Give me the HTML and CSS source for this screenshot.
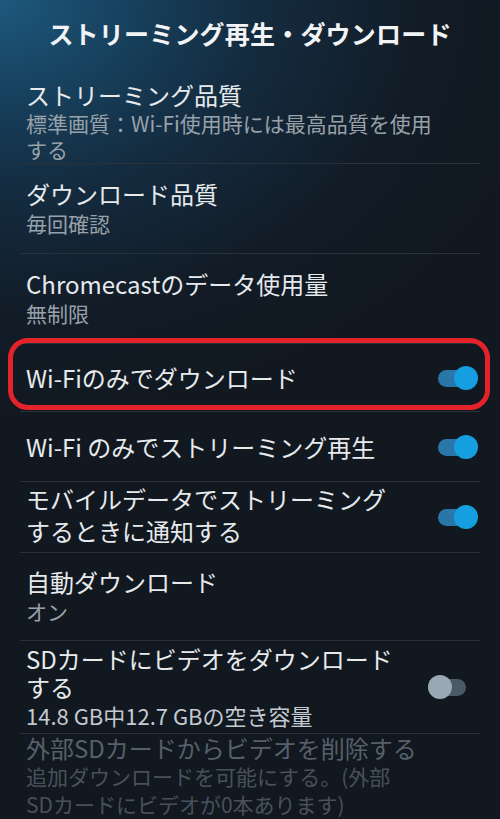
FILE: index.html
```html
<!DOCTYPE html>
<html lang="ja">
<head>
<meta charset="utf-8">
<title>ストリーミング再生・ダウンロード</title>
<link rel="stylesheet" href="styles.css">
</head>
<body>
<div class="screen">
  <header class="header">ストリーミング再生・ダウンロード</header>
  <ul class="list">
    <li class="row row--first">
      <div class="text">
        <div class="title">ストリーミング品質</div>
        <div class="sub">標準画質：Wi-Fi使用時には最高品質を使用する</div>
      </div>
    </li>
    <li class="row">
      <div class="text">
        <div class="title">ダウンロード品質</div>
        <div class="sub">毎回確認</div>
      </div>
    </li>
    <li class="row">
      <div class="text">
        <div class="title">Chromecastのデータ使用量</div>
        <div class="sub">無制限</div>
      </div>
    </li>
    <li class="row row--toggle row--highlight">
      <div class="text"><div class="title">Wi-Fiのみでダウンロード</div></div>
      <div class="switch switch--on"><span class="knob"></span></div>
    </li>
    <li class="row row--toggle row--tall">
      <div class="text"><div class="title">Wi-Fi のみでストリーミング再生</div></div>
      <div class="switch switch--on"><span class="knob"></span></div>
    </li>
    <li class="row row--toggle row--tall row--notify">
      <div class="text"><div class="title">モバイルデータでストリーミングするときに通知する</div></div>
      <div class="switch switch--on"><span class="knob"></span></div>
    </li>
    <li class="row row--auto">
      <div class="text">
        <div class="title">自動ダウンロード</div>
        <div class="sub">オン</div>
      </div>
    </li>
    <li class="row row--toggle row--sd">
      <div class="text">
        <div class="title">SDカードにビデオをダウンロードする</div>
        <div class="sub sub--light">14.8 GB中12.7 GBの空き容量</div>
      </div>
      <div class="switch switch--off"><span class="knob"></span></div>
    </li>
    <li class="row row--disabled">
      <div class="text">
        <div class="title">外部SDカードからビデオを削除する</div>
        <div class="sub">追加ダウンロードを可能にする。(外部SDカードにビデオが0本あります)</div>
      </div>
    </li>
  </ul>
</div>
</body>
</html>
```

FILE: styles.css
```css
html, body {
  margin: 0;
  padding: 0;
  height: 100%;
  background: #111820;
}

.screen {
  width: 500px;
  height: 819px;
  overflow: hidden;
  font-family: "Noto Sans CJK JP", "Noto Sans", sans-serif;
  color: #e6eaed;
  background:
    radial-gradient(ellipse 560px 420px at 0 0, #1d587d 0%, #17425f 22%, #142c40 45%, #121c27 75%, rgba(17,24,32,0) 100%),
    #111820;
}

.header {
  height: 66px;
  line-height: 66px;
  text-align: center;
  font-size: 25px;
  font-weight: 700;
  color: #f1f3f5;
  letter-spacing: 0.2px;
}

.list {
  list-style: none;
  margin: 0 20px;
  padding: 0;
}

.row {
  position: relative;
  display: flex;
  align-items: center;
  padding: 15px 2px 16px 6px;
  border-bottom: 1px solid #29313a;
}

.row--first {
  padding-top: 14px;
  padding-bottom: 1px;
}

.row--first .sub {
  line-height: 26px;
}

.row--auto {
  padding-top: 14px;
  padding-bottom: 15px;
}

.text {
  flex: 1;
  min-width: 0;
  max-width: 420px;
}

.title {
  font-size: 24px;
  line-height: 30px;
  color: #e6eaed;
}

.sub {
  font-size: 21px;
  line-height: 28px;
  color: #98a1a9;
}

.row--toggle {
  padding-top: 0;
  padding-bottom: 0;
  min-height: 67px;
}

.row--toggle .text {
  max-width: 380px;
}

.row--tall {
  min-height: 69px;
}

.row--tall .title {
  line-height: 32px;
}

.row--notify {
  align-items: flex-start;
  padding-top: 1px;
}

.row--notify .switch {
  margin-top: 22px;
}

.row--sd {
  padding-top: 0;
  padding-bottom: 0;
  min-height: 92px;
  align-items: flex-start;
}

.row--sd .text {
  padding-top: 4px;
}

.row--sd .title {
  line-height: 28px;
}

.row--sd .switch {
  margin-top: 34px;
}

.sub--light {
  font-size: 22px;
  color: #c4cad0;
  line-height: 29px;
}

.row--disabled {
  border-bottom: none;
  padding-top: 0;
}

.row--disabled .title {
  color: #56606b;
  line-height: 28px;
}

.row--disabled .sub {
  color: #48515b;
  line-height: 28px;
  max-width: 382px;
}

.row--highlight::after {
  content: "";
  position: absolute;
  left: -12px;
  right: -10px;
  top: -6px;
  bottom: 1px;
  border: 5px solid #e3222a;
  border-radius: 20px;
  pointer-events: none;
}

/* switches */
.switch {
  position: relative;
  flex: none;
  width: 40px;
  height: 24px;
  margin-left: auto;
}

.switch::before {
  content: "";
  position: absolute;
  left: 0;
  top: 4px;
  width: 38px;
  height: 17px;
  border-radius: 9px;
}

.knob {
  position: absolute;
  top: 0;
  width: 24px;
  height: 24px;
  border-radius: 50%;
}

.switch--on::before {
  background: #2877a8;
}

.switch--on .knob {
  right: 0;
  background: #169fe0;
}

.switch--off {
  margin-right: 10px;
}

.switch--off::before {
  background: #4a5968;
}

.switch--off .knob {
  left: 0;
  background: #9aa8b4;
}
```
